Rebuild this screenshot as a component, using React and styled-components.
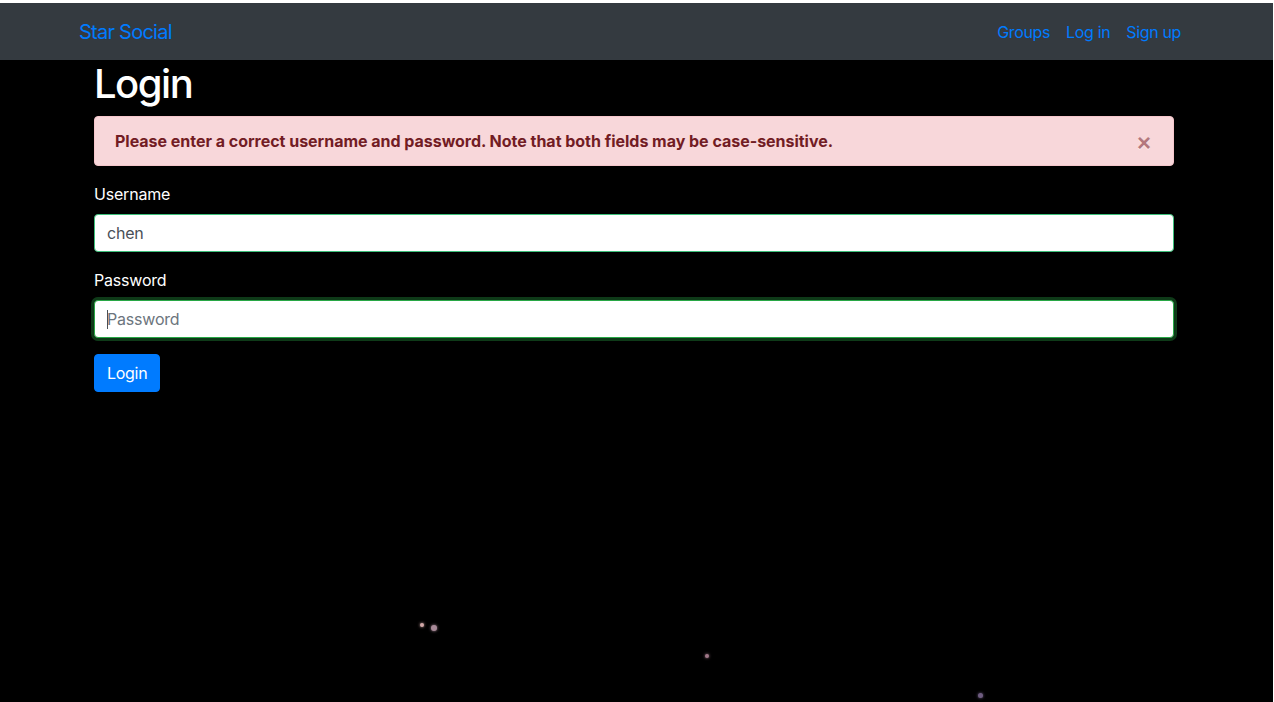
import React from "react";
import styled, { createGlobalStyle } from "styled-components";

const GlobalStyle = createGlobalStyle`
  html, body { margin: 0; padding: 0; background: #ffffff; }
  body {
    font-family: Inter, "Liberation Sans", Arial, sans-serif;
    font-size: 16px;
    line-height: 1.5;
    color: #212529;
  }
  * { box-sizing: border-box; }
`;

const Frame = styled.div`
  padding-top: 3px;
  background: #ffffff;
  min-height: 702px;
  display: flex;
  flex-direction: column;
`;

const Screen = styled.div`
  flex: 1;
  display: flex;
  flex-direction: column;
  margin-right: 1px;
`;

const Navbar = styled.nav`
  height: 57px;
  background: #343a40;
  display: flex;
  align-items: center;
  justify-content: space-between;
  padding: 0 84px 0 79px;
`;

const Brand = styled.a`
  color: #007bff;
  font-size: 20px;
  line-height: 30px;
  text-decoration: none;
  letter-spacing: -0.75px;
`;

const NavLinks = styled.ul`
  display: flex;
  list-style: none;
  margin: 0;
  padding: 0;
`;

const NavLink = styled.a`
  display: block;
  padding: 8px;
  color: #007bff;
  text-decoration: none;
  letter-spacing: -0.35px;
`;

const Main = styled.main`
  flex: 1;
  background: #000000;
  position: relative;
  overflow: hidden;
`;

const Container = styled.div`
  padding: 0 99px 0 94px;
`;

const Title = styled.h1`
  margin: 0 0 8px;
  font-size: 40px;
  line-height: 48px;
  font-weight: 500;
  color: #ffffff;
  letter-spacing: -1.5px;
`;

const Alert = styled.div`
  display: flex;
  align-items: center;
  justify-content: space-between;
  padding: 12px 20px;
  margin-bottom: 16px;
  background: #f8d7da;
  border: 1px solid #f5c6cb;
  border-radius: 4px;
  color: #721c24;
  font-weight: 700;
  line-height: 24px;
  letter-spacing: -0.02px;
`;

const Close = styled.button`
  border: 0;
  background: transparent;
  padding: 0;
  margin: 0 2px 0 0;
  height: 24px;
  font-family: "Liberation Sans", Arial, sans-serif;
  font-size: 24px;
  font-weight: 700;
  line-height: 28px;
  color: #721c24;
  opacity: 0.5;
  text-shadow: 0 1px 0 #fff;
  cursor: pointer;
`;

const FormGroup = styled.div`
  margin-bottom: 16px;
`;

const Label = styled.label`
  display: block;
  margin-bottom: 8px;
  color: #ffffff;
  line-height: 24px;
  letter-spacing: -0.2px;
`;

const FieldWrap = styled.div`
  position: relative;
`;

const Input = styled.input`
  display: block;
  width: 100%;
  height: 38px;
  padding: 6px 12px;
  font-family: inherit;
  font-size: 16px;
  line-height: 24px;
  color: #495057;
  background: #ffffff;
  border: 1px solid ${p => (p.$focused ? "#28a745" : "#3cbf7a")};
  border-radius: 4px;
  box-shadow: ${p => (p.$focused ? "0 0 0 3px rgba(40, 167, 69, 0.35)" : "none")};
  outline: none;
  letter-spacing: -0.2px;
  &::placeholder { color: #6c757d; opacity: 1; }
`;

const Caret = styled.span`
  position: absolute;
  left: 13px;
  top: 10px;
  width: 1px;
  height: 19px;
  background: #495057;
`;

const Button = styled.button`
  display: inline-block;
  height: 38px;
  padding: 6px 12px;
  font-family: inherit;
  font-size: 16px;
  line-height: 24px;
  color: #ffffff;
  background: #007bff;
  border: 1px solid #007bff;
  border-radius: 4px;
  cursor: pointer;
  letter-spacing: -0.3px;
`;

const Star = styled.span`
  position: absolute;
  border-radius: 50%;
  width: ${p => p.$size}px;
  height: ${p => p.$size}px;
  background: ${p => p.$color};
  box-shadow: 0 0 3px ${p => p.$color};
`;

const stars = [
  { x: 420, y: 563, s: 4, c: "#d2a8a8" },
  { x: 431, y: 565, s: 6, c: "#a88a98" },
  { x: 705, y: 594, s: 4, c: "#a07888" },
  { x: 978, y: 633, s: 5, c: "#6e5c80" },
];

export default function App() {
  return (
    <>
      <GlobalStyle />
      <Frame>
        <Screen>
          <Navbar>
            <Brand href="#">Star Social</Brand>
            <NavLinks>
              <li><NavLink href="#">Groups</NavLink></li>
              <li><NavLink href="#">Log in</NavLink></li>
              <li><NavLink href="#">Sign up</NavLink></li>
            </NavLinks>
          </Navbar>
          <Main>
            {stars.map((s, i) => (
              <Star
                key={i}
                $size={s.s}
                $color={s.c}
                style={{ left: s.x, top: s.y }}
              />
            ))}
            <Container>
              <Title>Login</Title>
              <Alert>
                <span>
                  Please enter a correct username and password. Note that both fields may be case-sensitive.
                </span>
                <Close aria-label="Close">×</Close>
              </Alert>
              <form onSubmit={e => e.preventDefault()}>
                <FormGroup>
                  <Label htmlFor="username">Username</Label>
                  <Input id="username" defaultValue="chen" />
                </FormGroup>
                <FormGroup>
                  <Label htmlFor="password">Password</Label>
                  <FieldWrap>
                    <Input id="password" type="password" placeholder="Password" $focused />
                    <Caret />
                  </FieldWrap>
                </FormGroup>
                <Button type="submit">Login</Button>
              </form>
            </Container>
          </Main>
        </Screen>
      </Frame>
    </>
  );
}
